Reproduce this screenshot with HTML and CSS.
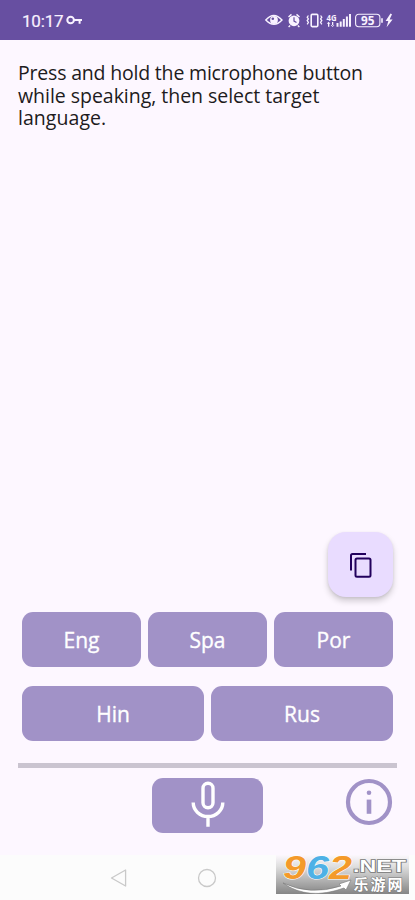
FILE: index.html
```html
<!DOCTYPE html>
<html lang="en">
<head>
<meta charset="utf-8">
<title>Voice translator</title>
<link rel="stylesheet" href="styles.css">
</head>
<body>
<header class="status">
  <span class="clock">10:17</span>
  <svg class="key" width="17" height="12" viewBox="0 0 17 12" fill="none" stroke="#f8f2ff" stroke-width="2"><circle cx="4.6" cy="6" r="3.3"/><path d="M8 6h8M13.6 6v3.8" /></svg>
  <svg class="indicators" width="130" height="20" viewBox="0 0 130 20">
    <g fill="none" stroke="#f8f2ff" stroke-width="1.4">
      <path d="M.8 10Q8.800 1 17 10Q9 18.600.8 10Z"/>
      <rect x="46.200" y="4.400" width="6.600" height="12.200" rx="1" stroke-width="1.600"/>
      <path d="M43.400 5.500l-1.200 1.700 1.200 1.700-1.200 1.700 1.200 1.700-1.200 2M55.600 5.500l1.200 1.700-1.200 1.700 1.200 1.700-1.200 1.700 1.200 2" stroke-width="1.300"/>
      <rect x="90.600" y="4.200" width="24.300" height="12.600" rx="3.200" stroke-width="1.100"/>
      <path d="M117 8.200v4.600" stroke-width="1.600"/>
      <path d="M23.500 7l3-2.600M34.500 7l-3-2.600M25.200 15.500L23.600 17M32.800 15.500L34.400 17"/>
    </g>
    <g fill="#f8f2ff">
      <circle cx="9" cy="10" r="3.900"/>
      <circle cx="29" cy="10.800" r="5.400"/>
      <path d="M71.500 13h2v3.800h-2zM74.700 11.500h2v5.300h-2zM77.800 9h2v7.800h-2zM80.900 6.500h2v10.300h-2zM84 4h2v12.800h-2zM63 13h1.300v3.800H63zM61.800 13.800l1.800-2 1.800 2zM67 12h1.300v3.800H67zM65.800 15l1.800 2 1.800-2z"/>
      <path d="M125.500 3.500L120.600 11h2.700l-1.700 6.300 6-7.700h-3l2.400-5.300z"/>
      <text x="61.500" y="10.500" class="net" textLength="10" lengthAdjust="spacingAndGlyphs">4G</text>
      <text x="96" y="15" class="charge" textLength="13.500" lengthAdjust="spacingAndGlyphs">95</text>
    </g>
    <circle cx="7.800" cy="8.800" r="1.300" fill="#674fa1"/>
    <path d="M29 7.300v3.800l2.500 1.500" fill="none" stroke="#674fa1" stroke-width="1.200"/>
  </svg>
</header>
<main>
  <p class="prompt"><span class="l1">Press and hold the microphone button</span><br><span class="l2">while speaking, then select target</span><br><span class="l3">language.</span></p>
  <button class="copy" aria-label="Copy"><svg width="24" height="28" viewBox="0 0 24 28" fill="none" stroke="#22005d" stroke-width="2"><path d="M2 19.500V4.500q0-1.500 1.500-1.500H17"/><rect x="6.500" y="7.600" width="15" height="18.200" rx="1.500"/></svg></button>
  <div class="row"><button>Eng</button><button>Spa</button><button>Por</button></div>
  <div class="row second"><button>Hin</button><button>Rus</button></div>
  <hr>
  <div class="controls">
    <button class="mic" aria-label="Hold to speak"><svg width="36" height="47" viewBox="0 0 36 47" fill="none" stroke="#fff" stroke-width="3.400"><rect x="13" y="2.200" width="10" height="24.500" rx="5"/><path d="M3.200 21.500a14.800 14 0 0 0 29.600 0M18 35.500v10.200"/></svg></button>
    <svg class="info" width="48" height="48" viewBox="0 0 48 48"><circle cx="24" cy="24" r="21" fill="none" stroke="#a192c7" stroke-width="4.200"/><circle cx="24" cy="14.800" r="2.300" fill="#a192c7"/><path d="M21.700 21.600h4.600v14.200h-4.600z" fill="#a192c7"/></svg>
  </div>
</main>
<footer class="nav">
  <svg width="18" height="20" viewBox="0 0 18 20" fill="none" stroke="#c9c9c9" stroke-width="1.300"><path d="M15.600 2v16L1.500 10z" stroke-linejoin="round"/></svg>
  <svg class="home" width="20" height="20" viewBox="0 0 20 20" fill="none" stroke="#c9c9c9" stroke-width="1.300"><circle cx="10" cy="10" r="8.500"/></svg>
</footer>
<svg class="watermark" width="139" height="49" viewBox="0 0 139 49">
  <defs><linearGradient id="shade" x2="0" y2="1"><stop stop-color="#fcf8fd"/><stop offset=".3" stop-color="#dedede"/><stop offset="1" stop-color="#858585"/></linearGradient></defs>
  <path d="M1 5h133v39H1z" fill="url(#shade)"/>
  <path d="M8 33Q35 46 66 36l-2-2 12-4-5 10-2-2Q33 51 8 33Z" fill="#fff" stroke="#777" stroke-width=".6"/>
  <g class="digits">
    <text x="8" y="28.500" fill="#f49a2a" textLength="23" lengthAdjust="spacingAndGlyphs">9</text>
    <text x="31" y="28.500" fill="#4eb1e6" textLength="23" lengthAdjust="spacingAndGlyphs">6</text>
    <text x="54" y="28.500" fill="#f49a2a" textLength="23" lengthAdjust="spacingAndGlyphs">2</text>
  </g>
  <text x="78" y="21.500" class="domain" textLength="53" lengthAdjust="spacingAndGlyphs">.NET</text>
  <text x="78.500" y="39.500" class="site" textLength="49">乐游网</text>
</svg>
</body>
</html>
```
FILE: styles.css
```css
* { box-sizing: border-box; }
body {
  margin: 0;
  width: 415px;
  height: 900px;
  overflow: hidden;
  display: flex;
  flex-direction: column;
  background: #fdf7ff;
  font-family: "Open Sans", "Noto Sans", sans-serif;
}
button { border: 0; padding: 0; margin: 0; font-family: inherit; }
svg { display: block; flex: none; }
.status {
  height: 40px;
  flex: none;
  display: flex;
  align-items: center;
  padding: 0 20px 0 22px;
  background: #674fa1;
  color: #f8f2ff;
}
.clock { position: relative; top: 1px; font: 400 17px/20px Roboto, sans-serif; width: 41px; letter-spacing: -.2px; white-space: nowrap; -webkit-text-stroke: .2px #f8f2ff; }
.key { margin-left: 3px; }
.indicators { margin-left: auto; overflow: visible; }
.net { font: 700 8px "Noto Sans", sans-serif; }
.charge { font: 700 12px "Noto Sans", sans-serif; }
main { height: 815px; flex: none; padding: 22px 18px 0; }
.prompt { margin: 0; height: 470px; font-size: 19.500px; line-height: 22.700px; color: #1d1b20; white-space: nowrap; }
.l1 { letter-spacing: -.190px; }
.l2 { letter-spacing: -.030px; }
.l3 { letter-spacing: .050px; }
.copy {
  display: flex;
  align-items: center;
  justify-content: center;
  width: 65px;
  height: 65px;
  margin-left: 310px;
  border-radius: 18px;
  background: #e9dcff;
  box-shadow: 0 4px 6px rgba(0,0,0,.18), 0 1px 3px rgba(0,0,0,.08);
}
.row { display: flex; gap: 7px; margin: 15px 4px 0; }
.row.second { margin-top: 19px; }
.row button {
  flex: 1;
  height: 55px;
  border-radius: 11px;
  background: #a192c7;
  color: #fff;
  font-size: 21px;
  -webkit-text-stroke: .35px #fff;
}
hr { height: 5px; margin: 22px 0 0; border: 0; background: #cac4d0; }
.controls { display: flex; align-items: flex-start; padding: 10px 4px 0 134px; }
.mic { display: flex; justify-content: center; padding-top: 3px; width: 111px; height: 55px; border-radius: 11px; background: #a192c7; }
.info { margin-left: auto; }
.nav { height: 45px; flex: none; display: flex; align-items: center; padding-left: 110px; background: #fcfcfc; }
.home { margin-left: 69px; }
.watermark { position: absolute; left: 275px; top: 850px; overflow: visible; }
.digits { font: italic 700 34px "Liberation Sans", sans-serif; stroke: #fff; stroke-width: 1px; paint-order: stroke; }
.domain { font: 700 17px "Liberation Sans", sans-serif; fill: #fff; stroke: #777; stroke-width: 1.500px; paint-order: stroke; }
.site { font: 700 15px "Noto Sans CJK SC", sans-serif; fill: #fff; stroke: #777; stroke-width: 1px; paint-order: stroke; }
```
